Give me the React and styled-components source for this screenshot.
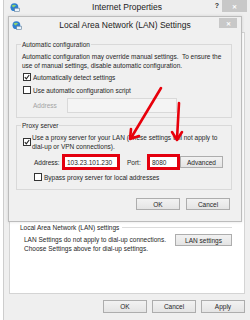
import React from "react";
import styled, { createGlobalStyle } from "styled-components";

const GlobalStyle = createGlobalStyle`
  html, body { margin: 0; padding: 0; background: #fff; }
  body { font-family: "Liberation Sans", Arial, sans-serif; }
`;

const Screen = styled.div`
  position: relative;
  width: 250px;
  height: 320px;
  overflow: hidden;
  display: flex;
  background: #fff;
  color: #262626;
  font-size: 6.5px;
`;

const Backdrop = styled.div`
  width: 3px;
  flex-shrink: 0;
  background: #fff;
`;

const Window = styled.div`
  flex: 1;
  display: flex;
  flex-direction: column;
  background: #efefef;
  border-left: 1px solid #cdcdcd;
`;

const TitleBar = styled.div`
  height: ${(p) => p.$h}px;
  display: grid;
  grid-template-columns: 1fr auto 1fr;
  align-items: start;
  flex-shrink: 0;
`;

const TitleIcon = styled.div`
  display: flex;
  padding: ${(p) => p.$pad};
`;

const TitleText = styled.div`
  font-size: 8.5px;
  color: #222;
  line-height: ${(p) => p.$h}px;
  white-space: nowrap;
`;

const TitleControls = styled.div`
  display: flex;
  justify-content: flex-end;
  align-items: flex-start;
  gap: 3px;
  padding-right: ${(p) => p.$right}px;
  padding-top: ${(p) => p.$top}px;
`;

const Help = styled.span`
  font-size: 7px;
  font-weight: bold;
  color: #333;
  line-height: 12px;
`;

const CloseBtn = styled.div`
  width: ${(p) => p.$w}px;
  height: ${(p) => p.$hh}px;
  background: #c8c8c8;
  color: #fff;
  font-size: 6px;
  display: flex;
  align-items: center;
  justify-content: center;
  font-weight: bold;
`;

const TabsSpace = styled.div`
  height: 16px;
  flex-shrink: 0;
`;

const Panel = styled.div`
  margin: 0 5px;
  height: 262px;
  box-sizing: border-box;
  background: #fff;
  border: 1px solid #d4d4d4;
  padding: 190px 12px 0 10px;
`;

const GroupHeader = styled.div`
  display: flex;
  align-items: center;
  gap: 3px;
  line-height: 9px;
`;

const Rule = styled.div`
  flex: 1;
  height: 1px;
  background: #dcdcdc;
`;

const LanBody = styled.div`
  display: flex;
  justify-content: space-between;
  align-items: flex-start;
  padding-left: 4px;
  margin-top: 2px;
`;

const Lines = styled.div`
  line-height: 9px;
  padding-top: 1px;
`;

const Button = styled.button`
  width: ${(p) => p.$w || 44}px;
  height: ${(p) => p.$h || 12}px;
  padding: 0;
  box-sizing: border-box;
  border: 1px solid #adadad;
  background: linear-gradient(#f2f2f2, #e4e4e4);
  font-family: inherit;
  font-size: 6.5px;
  color: #262626;
  flex-shrink: 0;
`;

const BottomBar = styled.div`
  display: flex;
  justify-content: flex-end;
  gap: 5px;
  padding: 6px 5px 0 0;
`;

const Dialog = styled.div`
  position: absolute;
  left: 8px;
  top: 16px;
  width: 234px;
  height: 206px;
  box-sizing: border-box;
  border: 1px solid #bcbcbc;
  background: #f0f0f0;
  box-shadow: 0 0 3px rgba(0, 0, 0, 0.12);
  display: flex;
  flex-direction: column;
`;

const DialogBody = styled.div`
  padding: 6px 9px 0 7px;
  display: flex;
  flex-direction: column;
`;

const Group = styled.fieldset`
  margin: ${(p) => p.$mt || 0}px 0 0;
  border: 1px solid #d9d9d9;
  padding: 0 6px ${(p) => p.$pb}px 6px;
  min-width: 0;
`;

const Legend = styled.legend`
  padding: 0 1px;
  margin-left: -2px;
  line-height: 9px;
`;

const Para = styled.p`
  margin: 2.5px 0 0 -1px;
  line-height: 9px;
  white-space: nowrap;
`;

const CheckRow = styled.div`
  display: flex;
  align-items: ${(p) => (p.$top ? "flex-start" : "center")};
  gap: ${(p) => p.$gap || 2}px;
  line-height: ${(p) => (p.$top ? 8.5 : 9)}px;
  margin-top: ${(p) => p.$mt}px;
  padding-left: ${(p) => p.$indent || 0}px;
  white-space: nowrap;
`;

const Box = styled.span`
  width: 8px;
  height: 8px;
  box-sizing: border-box;
  border: 1px solid #333;
  background: #fff;
  flex-shrink: 0;
  display: flex;
  align-items: center;
  justify-content: center;
  margin-top: ${(p) => p.$mt || 0}px;
`;

const FieldRow = styled.div`
  display: flex;
  align-items: center;
  margin-top: ${(p) => p.$mt}px;
  padding-left: ${(p) => p.$indent}px;
`;

const Label = styled.span`
  width: ${(p) => p.$w}px;
  margin-left: ${(p) => p.$ml || 0}px;
  color: ${(p) => (p.$dim ? "#a3a3a3" : "#262626")};
  flex-shrink: 0;
`;

const Input = styled.div`
  width: ${(p) => p.$w}px;
  height: ${(p) => p.$h}px;
  box-sizing: border-box;
  background: ${(p) => (p.$off ? "#f4f4f4" : "#fff")};
  border: ${(p) => (p.$mark ? "3px solid #e4000f" : "1px solid #d9d9d9")};
  padding-left: 2px;
  display: flex;
  align-items: center;
  overflow: hidden;
  white-space: nowrap;
  flex-shrink: 0;
`;

const DialogButtons = styled.div`
  display: flex;
  justify-content: flex-end;
  gap: 6px;
  margin-top: 8px;
  padding-right: 2px;
`;

const Overlay = styled.svg`
  position: absolute;
  left: 0;
  top: 0;
  pointer-events: none;
`;

const Globe = () => (
  <svg width="10" height="10" viewBox="0 0 10 10">
    <circle cx="4.4" cy="4.2" r="3.9" fill="#2d7fd1" />
    <path d="M1.6 2.6 Q3.5 1 6.2 2.2 Q5 3.8 3.2 4.4 Q2.2 3.6 1.6 2.6 Z" fill="#8fd26d" />
    <rect x="4.6" y="5.2" width="4.8" height="3.4" fill="#eaf3fb" stroke="#5d7c9a" strokeWidth="0.6" />
  </svg>
);

const Check = ({ on, mt }) => (
  <Box $mt={mt}>
    {on && (
      <svg width="6" height="6" viewBox="0 0 6 6">
        <path d="M0.8 3.2 L2.3 4.8 L5.2 1" stroke="#222" strokeWidth="1.1" fill="none" />
      </svg>
    )}
  </Box>
);

export default function App() {
  return (
    <Screen>
      <GlobalStyle />
      <Backdrop />
      <Window>
        <TitleBar $h={16}>
          <TitleIcon $pad="3px 0 0 6px">
            <Globe />
          </TitleIcon>
          <TitleText $h={15}>Internet Properties</TitleText>
          <TitleControls $right={3} $top={0}>
            <Help>?</Help>
            <CloseBtn $w={25} $hh={12}>✕</CloseBtn>
          </TitleControls>
        </TitleBar>
        <TabsSpace />
        <Panel>
          <GroupHeader>
            <span>Local Area Network (LAN) settings</span>
            <Rule />
          </GroupHeader>
          <LanBody>
            <Lines>
              LAN Settings do not apply to dial-up connections.
              <br />
              Choose Settings above for dial-up settings.
            </Lines>
            <Button $w={57}>LAN settings</Button>
          </LanBody>
        </Panel>
        <BottomBar>
          <Button $h={13}>OK</Button>
          <Button $h={13}>Cancel</Button>
          <Button $h={13}>Apply</Button>
        </BottomBar>
      </Window>

      <Dialog>
        <TitleBar $h={17}>
          <TitleIcon $pad="4px 0 0 3px">
            <Globe />
          </TitleIcon>
          <TitleText $h={17}>Local Area Network (LAN) Settings</TitleText>
          <TitleControls $right={4} $top={1}>
            <CloseBtn $w={18} $hh={10}>✕</CloseBtn>
          </TitleControls>
        </TitleBar>
        <DialogBody>
          <Group $pb={4}>
            <Legend>Automatic configuration</Legend>
            <Para>
              Automatic configuration may override manual settings.&nbsp; To ensure the
              <br />
              use of manual settings, disable automatic configuration.
            </Para>
            <CheckRow $mt={3}>
              <Check on />
              <span>Automatically detect settings</span>
            </CheckRow>
            <CheckRow $mt={4}>
              <Check />
              <span>Use automatic configuration script</span>
            </CheckRow>
            <FieldRow $mt={3.5} $indent={10}>
              <Label $w={34} $dim>
                Address
              </Label>
              <Input $w={110} $h={15} $off />
            </FieldRow>
          </Group>

          <Group $mt={2.5} $pb={7.5}>
            <Legend>Proxy server</Legend>
            <CheckRow $mt={4.5} $top $gap={1}>
              <Check on mt={4} />
              <span>
                Use a proxy server for your LAN (These settings will not apply to
                <br />
                dial-up or VPN connections).
              </span>
            </CheckRow>
            <FieldRow $mt={3} $indent={11}>
              <Label $w={28}>Address:</Label>
              <Input $w={58} $h={16} $mark>
                103.23.101.230
              </Input>
              <Label $w={20} $ml={7}>
                Port:
              </Label>
              <Input $w={33} $h={16} $mark>
                8080
              </Input>
              <Button $w={43}>Advanced</Button>
            </FieldRow>
            <CheckRow $mt={2.5} $indent={11}>
              <Check />
              <span>Bypass proxy server for local addresses</span>
            </CheckRow>
          </Group>

          <DialogButtons>
            <Button>OK</Button>
            <Button>Cancel</Button>
          </DialogButtons>
        </DialogBody>
      </Dialog>

      <Overlay width="250" height="320" viewBox="0 0 250 320">
        <g stroke="#e8000b" strokeWidth="2.6" fill="none" strokeLinecap="round" strokeLinejoin="round">
          <line x1="161" y1="88" x2="131" y2="138" />
          <polyline points="131,129 130,139 139,136" />
          <line x1="179" y1="103" x2="177" y2="139" />
          <polyline points="172,132 177,140 182,132" />
        </g>
      </Overlay>
    </Screen>
  );
}
